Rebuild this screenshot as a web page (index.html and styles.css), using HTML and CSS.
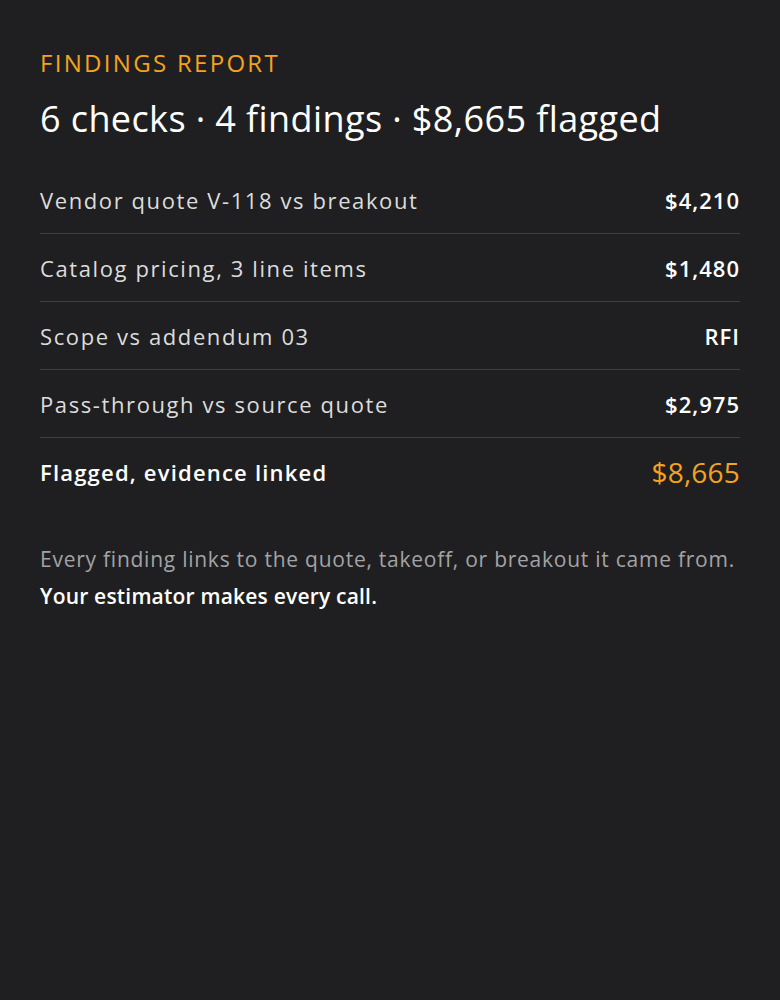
FILE: index.html
```html
<!DOCTYPE html>
<html lang="en">
<head>
    <meta charset="UTF-8">
    <meta name="viewport" content="width=device-width, initial-scale=1.0">
    <title>Findings Report</title>
    <link rel="stylesheet" href="styles.css">
</head>
<body>
    <div class="report">
        <div class="eyebrow">Findings report</div>
        <h1 class="headline">6 checks · 4 findings · $8,665 flagged</h1>

        <div class="rows">
            <div class="row">
                <span class="row-label">Vendor quote V-118 vs breakout</span>
                <span class="row-value">$4,210</span>
            </div>
            <div class="row">
                <span class="row-label">Catalog pricing, 3 line items</span>
                <span class="row-value">$1,480</span>
            </div>
            <div class="row">
                <span class="row-label">Scope vs addendum 03</span>
                <span class="row-value">RFI</span>
            </div>
            <div class="row">
                <span class="row-label">Pass-through vs source quote</span>
                <span class="row-value">$2,975</span>
            </div>
            <div class="row total">
                <span class="row-label">Flagged, evidence linked</span>
                <span class="row-value">$8,665</span>
            </div>
        </div>

        <p class="note">
            Every finding links to the quote, takeoff, or breakout it came from.<br>
            <strong>Your estimator makes every call.</strong>
        </p>
    </div>
</body>
</html>
```

FILE: styles.css
```css
body {
    margin: 0;
    background-color: #1f1f21;
    color: #ececec;
    font-family: "Open Sans", "Noto Sans", sans-serif;
}
.report {
    padding: 46px 40px 40px;
}
.eyebrow {
    color: #f5a31e;
    font-size: 24px;
    line-height: 34px;
    letter-spacing: 2.3px;
    text-transform: uppercase;
}
.headline {
    margin: 16px 0 0;
    font-size: 36px;
    line-height: 46px;
    font-weight: 400;
    letter-spacing: 0.4px;
    color: #ffffff;
}
.rows {
    margin-top: 24px;
}
.row {
    display: flex;
    justify-content: space-between;
    align-items: center;
    height: 67px;
    border-bottom: 1px solid #3e3e41;
    font-size: 22px;
}
.row-label {
    color: #dcdcdc;
    letter-spacing: 1.6px;
}
.row-value {
    color: #ffffff;
    font-weight: 600;
    letter-spacing: 1px;
}
.total {
    border-bottom: none;
}
.total .row-label {
    color: #ffffff;
    font-weight: 600;
    letter-spacing: 1.2px;
}
.total .row-value {
    color: #f5a31e;
    font-size: 28px;
    font-weight: 400;
    letter-spacing: 0.2px;
}
.note {
    margin: 36px 0 0;
    font-size: 21px;
    line-height: 37px;
    letter-spacing: 0.75px;
    color: #a3a3a5;
}
.note strong {
    color: #ffffff;
    font-weight: 600;
    letter-spacing: 0.2px;
}
```
